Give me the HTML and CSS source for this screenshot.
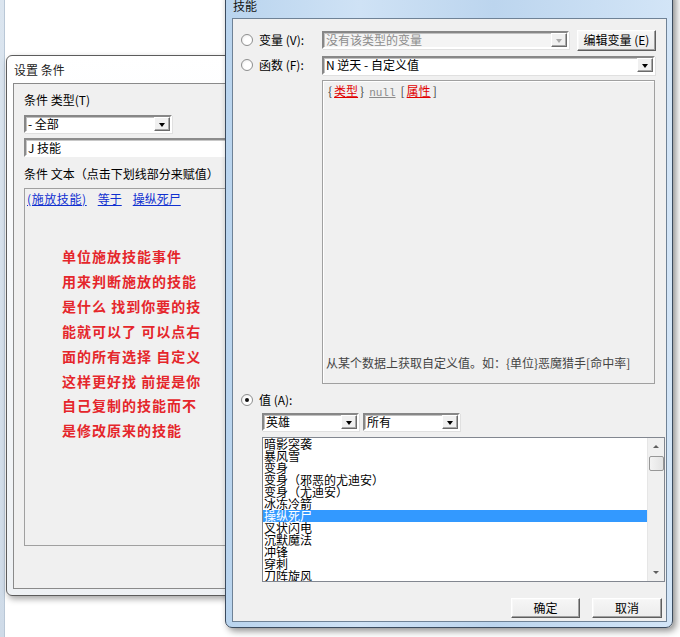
FILE: index.html
```html
<!DOCTYPE html>
<html>
<head>
<meta charset="utf-8">
<link rel="stylesheet" href="styles.css">
</head>
<body>
<div class="desk">
  <div class="strip"></div>

  <div class="win back">
    <div class="title">设置 条件</div>
    <div class="client">
      <div class="lbl l1">条件 类型(T)</div>
      <div class="combo c-type"><span class="val">- 全部</span><i class="arr"></i></div>
      <div class="edit">J 技能</div>
      <div class="lbl l2">条件 文本（点击下划线部分来赋值）</div>
      <div class="cond">
        <div class="links"><a>(施放技能)</a><a>等于</a><a>操纵死尸</a></div>
        <div class="note">单位施放技能事件<br>用来判断施放的技能<br>是什么 找到你要的技<br>能就可以了 可以点右<br>面的所有选择 自定义<br>这样更好找 前提是你<br>自己复制的技能而不<br>是修改原来的技能</div>
      </div>
    </div>
  </div>

  <div class="win front">
    <div class="ftitle">技能</div>
    <div class="fclient">
      <div class="row r1">
        <i class="radio"></i><span class="rlbl">变量 (V):</span>
        <div class="combo dis w246"><span class="val">没有该类型的变量</span><i class="arr"></i></div>
        <div class="btn b-edit">编辑变量 (E)</div>
      </div>
      <div class="row r2">
        <i class="radio"></i><span class="rlbl">函数 (F):</span>
        <div class="combo w332"><span class="val">N 逆天 - 自定义值</span><i class="arr"></i></div>
      </div>
      <div class="panel">
        <div class="expr"><span class="br">{</span><u class="red">类型</u><span class="br">}</span><u class="null">null</u><span class="br">[</span><u class="red">属性</u><span class="br">]</span></div>
        <div class="desc">从某个数据上获取自定义值。如：{单位}恶魔猎手[命中率]</div>
      </div>
      <div class="row r3">
        <i class="radio on"></i><span class="rlbl">值 (A):</span>
      </div>
      <div class="combos">
        <div class="combo w97"><span class="val">英雄</span><i class="arr"></i></div>
        <div class="combo w97"><span class="val">所有</span><i class="arr"></i></div>
      </div>
      <div class="list">
        <div class="items">
          <div class="it">暗影突袭</div>
          <div class="it">暴风雪</div>
          <div class="it">变身</div>
          <div class="it">变身（邪恶的尤迪安）</div>
          <div class="it">变身（尤迪安）</div>
          <div class="it">冰冻冷箭</div>
          <div class="it sel">操纵死尸</div>
          <div class="it">叉状闪电</div>
          <div class="it">沉默魔法</div>
          <div class="it">冲锋</div>
          <div class="it">穿刺</div>
          <div class="it">刀阵旋风</div>
        </div>
        <div class="sb">
          <div class="sbtn up"><i></i></div>
          <div class="track"><div class="thumb"></div></div>
          <div class="sbtn dn"><i></i></div>
        </div>
      </div>
      <div class="btns">
        <div class="btn b-ok">确定</div>
        <div class="btn b-cancel">取消</div>
      </div>
    </div>
  </div>
</div>
</body>
</html>
```

FILE: styles.css
```css
* { box-sizing: border-box; }
html, body { margin: 0; padding: 0; background: #fff; }
body {
  font-family: "Noto Sans CJK SC", "DejaVu Sans", sans-serif;
  font-size: 12px;
  color: #000;
}
.desk {
  position: relative;
  width: 680px;
  height: 637px;
  overflow: hidden;
  background: #fff;
}
.strip {
  position: absolute;
  left: 0; top: 0;
  width: 5px; height: 637px;
  background: linear-gradient(#dbe5ef, #cfdbe8);
  border-right: 1px solid #b9c7d6;
}

/* ---------- back window ---------- */
.win.back {
  position: absolute;
  left: 6px; top: 55px;
  width: 250px; height: 541px;
  border: 1px solid #5c5c5c;
  border-radius: 6px;
  background: linear-gradient(#ffffff, #f7f9fb 40%, #eef1f4);
  box-shadow: 2px 3px 6px rgba(0,0,0,0.35);
  padding: 0 0 6px 6px;
  display: flex;
  flex-direction: column;
}
.back .title {
  height: 27px;
  line-height: 28px;
  padding-left: 1px;
  color: #222;
  font-size: 12px;
}
.back .client {
  flex: 1;
  background: #f0f0f0;
  border: 1px solid #8a8a8a;
  border-right: none;
  padding-left: 10px;
  display: flex;
  flex-direction: column;
}
.lbl { line-height: 14px; height: 14px; white-space: nowrap; }
.l1 { margin-top: 9px; }
.c-type { margin-top: 8px; width: 148px; }
.edit {
  margin-top: 5px;
  height: 19px;
  width: 230px;
  background: #fff;
  border: 2px solid;
  border-color: #8c8c8c #fff #fff #8c8c8c;
  box-shadow: inset 1px 1px 0 #c8c8c8;
  line-height: 15px;
  padding-left: 2px;
  white-space: nowrap;
}
.l2 { margin-top: 10px; }
.cond {
  margin-top: 7px;
  height: 358px;
  border: 1px solid #a0a0a0;
  border-right: none;
  background: #f0f0f0;
}
.links {
  margin-top: 3px;
  padding-left: 2px;
  line-height: 14px;
  display: flex;
  gap: 11px;
}
.links a {
  color: #1030d0;
  text-decoration: underline;
  white-space: nowrap;
}
.links a:first-child { letter-spacing: 0.6px; }
.note {
  margin-top: 38px;
  padding-left: 37px;
  color: #e5262b;
  font-weight: bold;
  font-size: 14px;
  line-height: 24.9px;
  letter-spacing: 1px;
  white-space: nowrap;
}

/* ---------- front window ---------- */
.win.front {
  position: absolute;
  left: 225px; top: -12px;
  width: 448px; height: 640px;
  border: 1px solid #3b4b5e;
  border-radius: 7px;
  background: linear-gradient(90deg, #b9d4ee, #cfe2f5 30%, #bcd5ee 60%, #d3e5f7);
  box-shadow: 3px 3px 7px rgba(0,0,0,0.45);
  padding: 0 5px 5px 6px;
  display: flex;
  flex-direction: column;
}
.ftitle {
  height: 29px;
  padding-top: 10px;
  padding-left: 1px;
  line-height: 14px;
  color: #111;
  font-size: 12px;
}
.fclient {
  flex: 1;
  background: #f0f0f0;
  border: 1px solid #6f8296;
  display: flex;
  flex-direction: column;
  padding-left: 8px;
}
.row { display: flex; align-items: center; }
.r1 { margin-top: 11px; height: 20px; }
.r2 { margin-top: 5px; height: 20px; }
.r3 { margin-top: 9px; height: 14px; }
.radio {
  width: 12px; height: 12px;
  border-radius: 50%;
  border: 1px solid #8e8f8f;
  background: radial-gradient(circle at 60% 60%, #fff 40%, #e6e6e6);
  position: relative;
  flex: none;
}
.radio.on::after {
  content: "";
  position: absolute;
  left: 3px; top: 3px;
  width: 4px; height: 4px;
  border-radius: 50%;
  background: #111;
}
.rlbl {
  margin-left: 6px;
  width: 63px;
  line-height: 14px;
  white-space: nowrap;
}

.combo {
  height: 18px;
  background: #fff;
  border: 2px solid;
  border-color: #878787 #fff #fff #878787;
  box-shadow: inset 1px 1px 0 #c0c0c0, 1px 1px 0 #e0e0e0;
  display: flex;
  align-items: center;
  justify-content: space-between;
  flex: none;
}
.combo .val {
  padding-left: 2px;
  line-height: 14px;
  white-space: nowrap;
}
.combo .arr {
  width: 16px; height: 14px;
  background: #f0f0f0;
  border: 1px solid;
  border-color: #fff #6b6b6b #6b6b6b #fff;
  box-shadow: inset -1px -1px 0 #a8a8a8;
  position: relative;
  flex: none;
}
.combo .arr::after {
  content: "";
  position: absolute;
  left: 4px; top: 5px;
  border-left: 3.5px solid transparent;
  border-right: 3.5px solid transparent;
  border-top: 4px solid #000;
}
.combo.dis { background: #f4f4f4; color: #8d8d8d; }
.combo.dis .arr::after { border-top-color: #a8a8a8; }
.w246 { width: 247px; }
.w332 { width: 333px; }
.w97 { width: 97px; }
.r2 .combo { height: 19px; }

.btn {
  height: 21px;
  background: linear-gradient(#f6f6f6, #ececec);
  border: 1px solid;
  border-color: #fff #5e5e5e #5e5e5e #fff;
  box-shadow: inset -1px -1px 0 #a0a0a0, inset 1px 1px 0 #f8f8f8;
  text-align: center;
  line-height: 18px;
  white-space: nowrap;
  flex: none;
}
.b-edit { margin-left: 8px; width: 79px; }

.panel {
  margin-top: 5px;
  margin-left: 81px;
  width: 333px;
  height: 304px;
  border: 1px solid #a0a0a0;
  box-shadow: inset 1px 1px 0 #fff;
  background: #f0f0f0;
  display: flex;
  flex-direction: column;
  justify-content: space-between;
  padding: 3px 0 13px 5px;
}
.expr { line-height: 14px; white-space: nowrap; display: flex; align-items: baseline; }
.expr .br { color: #444; margin: 0 2px; }
.expr .br:first-child { margin-left: 0; }
.expr .red { color: #e00000; }
.expr .null {
  color: #8a8a8a;
  font-family: "Liberation Mono", "DejaVu Sans Mono", monospace;
  font-size: 11px;
  margin: 0 3px;
}
.desc { line-height: 14px; color: #444; white-space: nowrap; margin-left: -2px; }

.combos {
  margin-top: 6px;
  margin-left: 21px;
  display: flex;
  gap: 4px;
}
.list {
  margin-top: 6px;
  margin-left: 21px;
  width: 403px;
  height: 145px;
  background: #fff;
  border: 1px solid #828790;
  display: flex;
}
.items { flex: 1; overflow: hidden; }
.it {
  height: 12px;
  line-height: 12px;
  padding-left: 1px;
  white-space: nowrap;
  font-size: 12px;
}
.it.sel { background: #3399ff; color: #fff; }
.sb {
  width: 17px;
  background: #f0f0f0;
  border-left: 1px solid #e6e6e6;
  display: flex;
  flex-direction: column;
}
.sbtn {
  height: 17px;
  position: relative;
}
.sbtn i {
  position: absolute;
  left: 5px;
  border-left: 3px solid transparent;
  border-right: 3px solid transparent;
}
.sbtn.up i { top: 7px; border-bottom: 3px solid #5f5f5f; }
.sbtn.dn i { top: 7px; border-top: 3px solid #5f5f5f; }
.track { flex: 1; position: relative; }
.thumb {
  position: absolute;
  left: 1px; right: 0;
  top: 1px; height: 15px;
  border: 1px solid #979797;
  border-radius: 2px;
  background: linear-gradient(90deg, #f3f3f3, #e3e3e3);
}

.btns {
  margin-top: 16px;
  display: flex;
  justify-content: flex-end;
  gap: 12px;
  padding-right: 4px;
}
.b-ok { width: 69px; height: 20px; }
.b-cancel { width: 70px; height: 20px; }
```
